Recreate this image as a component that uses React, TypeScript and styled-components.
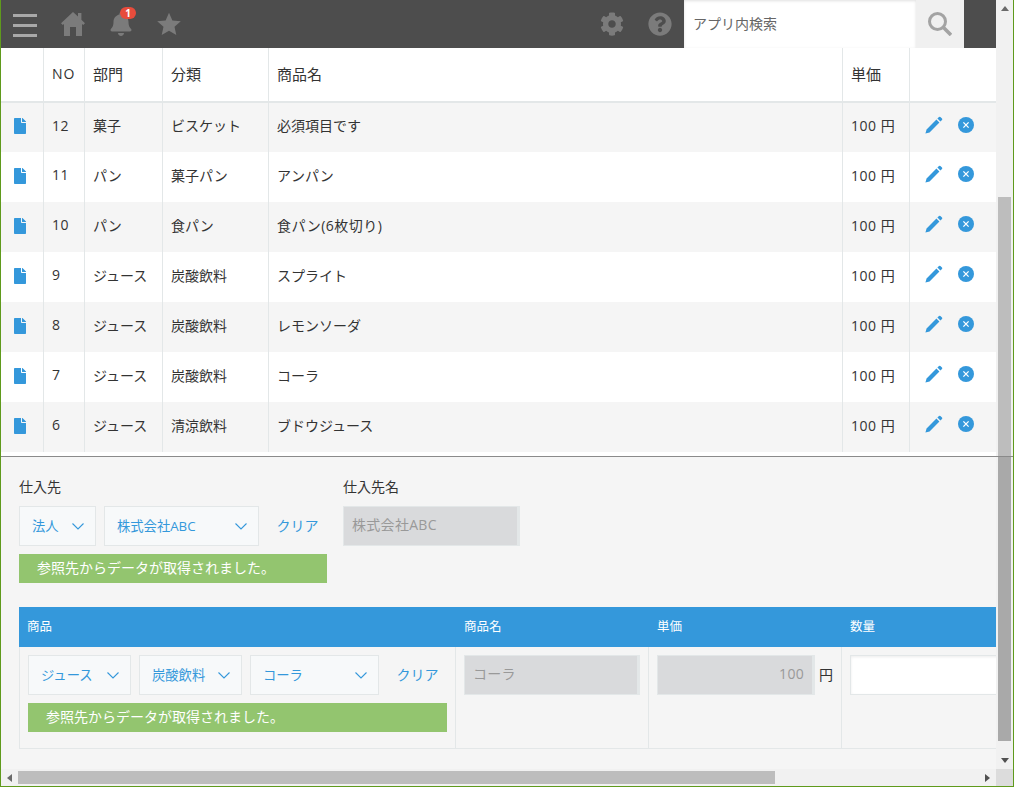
import React from "react";
import styled, { createGlobalStyle } from "styled-components";
import { FaBell, FaCog, FaQuestionCircle, FaFile } from "react-icons/fa";

const Global = createGlobalStyle`
  html, body { margin: 0; padding: 0; overflow: hidden; background: #fff; }
  * { box-sizing: border-box; }
  body { font-family: "Open Sans", "Noto Sans CJK JP", sans-serif; font-size: 14px; color: #333; }
`;

const Window = styled.div`
  width: 1014px;
  height: 787px;
  display: grid;
  grid-template-columns: 995px 17px;
  grid-template-rows: 769px 17px;
  border-left: 1px solid #5f9a1c;
  border-right: 1px solid #5f9a1c;
  border-bottom: 1px solid #5f9a1c;
  overflow: hidden;
`;
const Main = styled.main`
  display: flex;
  flex-direction: column;
  min-width: 0;
  overflow: hidden;
  background: #f5f5f5;
`;
const Header = styled.header`
  height: 48px;
  flex: none;
  background: #4d4d4d;
  display: flex;
  align-items: center;
  gap: 24px;
  padding: 0 32px 0 12px;
  color: #7b7b7b;
`;
const MenuBars = styled.div`
  width: 24px;
  height: 23px;
  margin-top: 3px;
  display: flex;
  flex-direction: column;
  gap: 7px;
  span { display: block; height: 3px; background: #a8a8a8; }
`;
const IconSlot = styled.div`
  position: relative;
  width: 24px;
  height: 24px;
  display: flex;
  align-items: center;
  justify-content: center;
  svg { display: block; }
`;
const RightIconSlot = styled(IconSlot)`
  margin-left: auto;
`;
const Badge = styled.span`
  position: absolute;
  left: 11px;
  top: -5px;
  width: 16px;
  height: 12px;
  border-radius: 6px;
  background: #e74c3c;
  color: #fff;
  font-size: 10px;
  font-weight: 700;
  line-height: 12px;
  text-align: center;
`;
const SearchBox = styled.div`
  margin-left: -12px;
  width: 280px;
  height: 48px;
  display: flex;
  background: #fff;
`;
const SearchText = styled.div`
  flex: 1;
  padding-left: 9px;
  line-height: 47px;
  font-size: 14px;
  color: #666;
  box-shadow: inset 0 1px 3px rgba(0, 0, 0, 0.12);
`;
const SearchButton = styled.div`
  width: 48px;
  background: #f0f0f0;
  display: flex;
  align-items: center;
  justify-content: center;
`;
const LIST_COLUMNS = "43px 41px 78px 106px 574px 67px 86px";
const HeadRow = styled.div`
  height: 55px;
  flex: none;
  display: grid;
  grid-template-columns: ${LIST_COLUMNS};
  background: #fff;
  border-bottom: 2px solid #e3e7e8;
`;
const HeadCell = styled.div<{ $wide?: boolean }>`
  padding: 0 0 2px 8px;
  border-right: 1px solid #e3e7e8;
  display: flex;
  align-items: center;
  font-size: ${(p) => (p.$wide ? "14px" : "15px")};
  letter-spacing: ${(p) => (p.$wide ? "1px" : "0")};
  &:last-child { border-right: 0; }
`;
const Row = styled.div<{ $odd: boolean; $first: boolean }>`
  height: ${(p) => (p.$first ? 49 : 50)}px;
  flex: none;
  display: grid;
  grid-template-columns: ${LIST_COLUMNS};
  background: ${(p) => (p.$odd ? "#f5f5f5" : "#fff")};
`;
const Cell = styled.div<{ $spaced?: boolean }>`
  padding: 0 0 5px 8px;
  border-right: 1px solid #e3e7e8;
  display: flex;
  align-items: center;
  white-space: nowrap;
  letter-spacing: ${(p) => (p.$spaced ? "0.5px" : "0")};
`;
const FileCell = styled(Cell)`
  padding: 0 0 3px 11px;
  color: #3498db;
`;
const ActionCell = styled(Cell)`
  padding: 0 0 6px 15px;
  gap: 15px;
  border-right: 0;
  color: #3498db;
`;
const WhiteStrip = styled.div`
  height: 4px;
  flex: none;
  background: #fff;
`;
const Divider = styled.div`
  height: 1px;
  flex: none;
  background: #8a8a8a;
`;
const Form = styled.section`
  flex: 1;
  min-height: 0;
  padding: 20px 0 0 18px;
  overflow: hidden;
`;
const TopFields = styled.div`
  display: flex;
`;
const LookupField = styled.div`
  width: 324px;
`;
const NameField = styled.div``;
const Label = styled.div`
  height: 20px;
  line-height: 20px;
  margin-bottom: 9px;
  font-size: 14px;
  color: #333;
`;
const Controls = styled.div`
  display: flex;
  gap: 8px;
  align-items: center;
`;
const Select = styled.div<{ $w: number }>`
  width: ${(p) => p.$w}px;
  height: 40px;
  flex: none;
  border: 1px solid #e3e7e8;
  background: #f7f9fa;
  color: #3498db;
  display: flex;
  align-items: center;
  justify-content: space-between;
  padding: 0 11px 2px 12px;
  font-size: 13.3px;
  white-space: nowrap;
  svg { margin-top: 2px; }
`;
const Clear = styled.span`
  margin-left: 9.5px;
  padding-bottom: 2px;
  color: #3498db;
  font-size: 14px;
  white-space: nowrap;
`;
const Notice = styled.div<{ $w: number }>`
  width: ${(p) => p.$w}px;
  height: 29px;
  margin-top: 8px;
  padding-left: 18px;
  background: #93c56f;
  color: #fff;
  font-size: 14px;
  line-height: 28px;
  white-space: nowrap;
`;
const ReadOnly = styled.div<{ $w: number; $right?: boolean }>`
  width: ${(p) => p.$w}px;
  height: 40px;
  flex: none;
  background: #d9dadc;
  border: 1px solid #e3e7e8;
  border-right-width: 3px;
  color: #999;
  font-size: 14px;
  letter-spacing: 0.3px;
  line-height: 36px;
  padding: 0 8px;
  text-align: ${(p) => (p.$right ? "right" : "left")};
`;
const SubHead = styled.div`
  margin-top: 24px;
  height: 40px;
  display: grid;
  grid-template-columns: 437px 193px 193px 154px;
  background: #3498db;
`;
const SubHeadCell = styled.div`
  padding-left: 8px;
  color: #fff;
  font-size: 12.5px;
  line-height: 39px;
`;
const SubBody = styled.div`
  height: 102px;
  display: grid;
  grid-template-columns: 436px 193px 193px 154px;
  border-left: 1px solid #e3e7e8;
  border-bottom: 1px solid #e3e7e8;
  overflow: hidden;
`;
const SubCell = styled.div`
  padding: 8px;
  border-right: 1px solid #e3e7e8;
  min-width: 0;
  &:last-child { border-right: 0; padding-right: 0; }
`;
const Unit = styled.span`
  margin-left: -4px;
  padding-bottom: 2px;
  font-size: 14px;
`;
const QtyInput = styled.div`
  width: 220px;
  height: 40px;
  background: #fff;
  border: 1px solid #e3e7e8;
  box-shadow: inset 0 1px 3px rgba(0, 0, 0, 0.08);
`;
const VBar = styled.aside`
  display: flex;
  flex-direction: column;
  background: #f1f1f1;
  overflow: hidden;
`;
const Arrow = styled.div`
  height: 17px;
  width: 17px;
  flex: none;
  display: flex;
  align-items: center;
  justify-content: center;
  svg { display: block; }
`;
const VSpace = styled.div<{ $h: number }>`
  height: ${(p) => p.$h}px;
  flex: none;
`;
const VThumb = styled.div<{ $h: number; $dim?: boolean }>`
  height: ${(p) => p.$h}px;
  width: 13px;
  margin-left: 2px;
  flex: none;
  background: ${(p) => (p.$dim ? "#a9a9a9" : "#bdbdbd")};
`;
const HBar = styled.div`
  display: flex;
  align-items: center;
  background: #f1f1f1;
`;
const HThumb = styled.div`
  width: 757px;
  height: 13px;
  flex: none;
  background: #bdbdbd;
`;
const HSpace = styled.div`
  flex: 1;
`;
const Corner = styled.div`
  background: #dcdcdc;
`;

const Chevron = () => (
  <svg width="12" height="7" viewBox="0 0 12 7" fill="none" stroke="#3498db" strokeWidth="1.1">
    <polyline points="0.5,0.5 6,6 11.5,0.5" />
  </svg>
);

const HomeIcon = () => (
  <svg width="24" height="24" viewBox="0 0 24 24" fill="#7b7b7b">
    <path fillRule="evenodd" d="M12 0 L17 4.6 V1 H20.4 V7.8 L24 11.2 L22.2 13 L21 12 V24 H15 V15 H9 V24 H3 V12 L1.8 13 L0 11.2 Z" />
  </svg>
);

const StarIcon = () => (
  <svg width="24" height="24" viewBox="0 0 24 24" fill="#7b7b7b">
    <polygon points="12,0.8 15.4,8.4 23.8,9.3 17.5,14.8 19.3,23 12,18.8 4.7,23 6.5,14.8 0.2,9.3 8.6,8.4" />
  </svg>
);

const SearchIcon = () => (
  <svg width="24" height="24" viewBox="0 0 24 24" fill="none" stroke="#a3a3a3">
    <circle cx="9.5" cy="9.5" r="8" strokeWidth="3" />
    <line x1="15.5" y1="15.5" x2="23" y2="23" strokeWidth="3.6" />
  </svg>
);

const PencilIcon = () => (
  <svg width="18" height="18" viewBox="0 0 18 18" fill="#3498db">
    <path d="M0.4 17.6 L1.6 13.4 L11.4 3.6 L14.4 6.6 L4.6 16.4 Z" />
    <path d="M12.4 2.6 L14 1 A1 1 0 0 1 15.4 1 L17 2.6 A1 1 0 0 1 17 4 L15.4 5.6 Z" />
  </svg>
);

const RemoveIcon = () => (
  <svg width="16" height="16" viewBox="0 0 16 16">
    <circle cx="8" cy="8" r="8" fill="#3498db" />
    <path d="M5.4 5.4 L10.6 10.6 M10.6 5.4 L5.4 10.6" stroke="#fff" strokeWidth="1.3" />
  </svg>
);

const ArrowGlyph = ({ dir }: { dir: "up" | "down" | "left" | "right" }) => {
  const pts = { up: "0,5 4,0 8,5", down: "0,0 8,0 4,5", left: "5,0 5,8 0,4", right: "0,0 0,8 5,4" }[dir];
  const horizontal = dir === "left" || dir === "right";
  return (
    <svg width={horizontal ? 5 : 8} height={horizontal ? 8 : 5} viewBox={horizontal ? "0 0 5 8" : "0 0 8 5"}>
      <polygon points={pts} fill={dir === "up" || dir === "left" ? "#6a6a6a" : "#505050"} />
    </svg>
  );
};

const rows = [
  ["12", "菓子", "ビスケット", "必須項目です"],
  ["11", "パン", "菓子パン", "アンパン"],
  ["10", "パン", "食パン", "食パン(6枚切り)"],
  ["9", "ジュース", "炭酸飲料", "スプライト"],
  ["8", "ジュース", "炭酸飲料", "レモンソーダ"],
  ["7", "ジュース", "炭酸飲料", "コーラ"],
  ["6", "ジュース", "清涼飲料", "ブドウジュース"],
];

export default function App() {
  return (
    <>
      <Global />
      <Window>
        <Main>
          <Header>
            <MenuBars>
              <span />
              <span />
              <span />
            </MenuBars>
            <IconSlot><HomeIcon /></IconSlot>
            <IconSlot>
              <FaBell size={24} />
              <Badge>1</Badge>
            </IconSlot>
            <IconSlot><StarIcon /></IconSlot>
            <RightIconSlot><FaCog size={24} /></RightIconSlot>
            <IconSlot><FaQuestionCircle size={24} /></IconSlot>
            <SearchBox>
              <SearchText>アプリ内検索</SearchText>
              <SearchButton><SearchIcon /></SearchButton>
            </SearchBox>
          </Header>
          <HeadRow>
            <HeadCell />
            <HeadCell $wide>NO</HeadCell>
            <HeadCell>部門</HeadCell>
            <HeadCell>分類</HeadCell>
            <HeadCell>商品名</HeadCell>
            <HeadCell>単価</HeadCell>
            <HeadCell />
          </HeadRow>
          {rows.map((r, i) => (
            <Row key={r[0]} $odd={i % 2 === 0} $first={i === 0}>
              <FileCell><FaFile size={16} /></FileCell>
              <Cell $spaced>{r[0]}</Cell>
              <Cell>{r[1]}</Cell>
              <Cell>{r[2]}</Cell>
              <Cell $spaced={/[0-9]/.test(r[3])}>{r[3]}</Cell>
              <Cell $spaced>100 円</Cell>
              <ActionCell>
                <PencilIcon />
                <RemoveIcon />
              </ActionCell>
            </Row>
          ))}
          <WhiteStrip />
          <Divider />
          <Form>
            <TopFields>
              <LookupField>
                <Label>仕入先</Label>
                <Controls>
                  <Select $w={77}>法人<Chevron /></Select>
                  <Select $w={155}>株式会社ABC<Chevron /></Select>
                  <Clear>クリア</Clear>
                </Controls>
                <Notice $w={308}>参照先からデータが取得されました。</Notice>
              </LookupField>
              <NameField>
                <Label>仕入先名</Label>
                <ReadOnly $w={177}>株式会社ABC</ReadOnly>
              </NameField>
            </TopFields>
            <SubHead>
              <SubHeadCell>商品</SubHeadCell>
              <SubHeadCell>商品名</SubHeadCell>
              <SubHeadCell>単価</SubHeadCell>
              <SubHeadCell>数量</SubHeadCell>
            </SubHead>
            <SubBody>
              <SubCell>
                <Controls>
                  <Select $w={103}>ジュース<Chevron /></Select>
                  <Select $w={103}>炭酸飲料<Chevron /></Select>
                  <Select $w={129}>コーラ<Chevron /></Select>
                  <Clear>クリア</Clear>
                </Controls>
                <Notice $w={419}>参照先からデータが取得されました。</Notice>
              </SubCell>
              <SubCell>
                <ReadOnly $w={176}>コーラ</ReadOnly>
              </SubCell>
              <SubCell>
                <Controls>
                  <ReadOnly $w={158} $right>100</ReadOnly>
                  <Unit>円</Unit>
                </Controls>
              </SubCell>
              <SubCell>
                <QtyInput />
              </SubCell>
            </SubBody>
          </Form>
        </Main>
        <VBar>
          <Arrow><ArrowGlyph dir="up" /></Arrow>
          <VSpace $h={180} />
          <VThumb $h={259} />
          <Divider />
          <VThumb $h={284} $dim />
          <VSpace $h={11} />
          <Arrow><ArrowGlyph dir="down" /></Arrow>
        </VBar>
        <HBar>
          <Arrow><ArrowGlyph dir="left" /></Arrow>
          <HThumb />
          <HSpace />
          <Arrow><ArrowGlyph dir="right" /></Arrow>
        </HBar>
        <Corner />
      </Window>
    </>
  );
}
